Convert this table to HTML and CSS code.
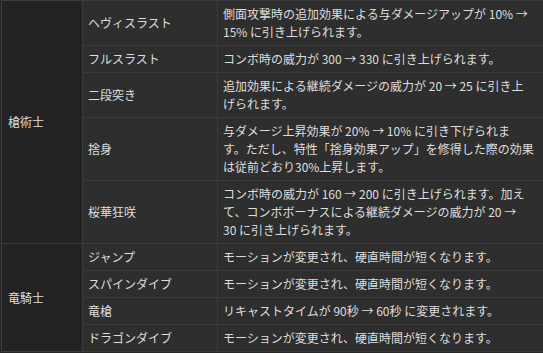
FILE: index.html
```html
<!DOCTYPE html>
<html lang="ja">
<head>
<meta charset="utf-8">
<link rel="stylesheet" href="styles.css">
</head>
<body>
<table class="changes">
  <colgroup>
    <col class="c-job">
    <col class="c-action">
    <col class="c-desc">
  </colgroup>
  <tbody>
    <tr>
      <th class="job" rowspan="5">槍術士</th>
      <td>ヘヴィスラスト</td>
      <td>側面攻撃時の追加効果による与ダメージアップが 10% →<br>15% に引き上げられます。</td>
    </tr>
    <tr>
      <td>フルスラスト</td>
      <td>コンボ時の威力が 300 → 330 に引き上げられます。</td>
    </tr>
    <tr>
      <td>二段突き</td>
      <td>追加効果による継続ダメージの威力が 20 → 25 に引き上<br>げられます。</td>
    </tr>
    <tr>
      <td>捨身</td>
      <td>与ダメージ上昇効果が 20% → 10% に引き下げられま<br>す。ただし、特性「捨身効果アップ」を修得した際の効果<br>は従前どおり30%上昇します。</td>
    </tr>
    <tr>
      <td>桜華狂咲</td>
      <td>コンボ時の威力が 160 → 200 に引き上げられます。加え<br>て、コンボボーナスによる継続ダメージの威力が 20 →<br>30 に引き上げられます。</td>
    </tr>
    <tr>
      <th class="job" rowspan="4">竜騎士</th>
      <td>ジャンプ</td>
      <td>モーションが変更され、硬直時間が短くなります。</td>
    </tr>
    <tr>
      <td>スパインダイブ</td>
      <td>モーションが変更され、硬直時間が短くなります。</td>
    </tr>
    <tr>
      <td>竜槍</td>
      <td>リキャストタイムが 90秒 → 60秒 に変更されます。</td>
    </tr>
    <tr>
      <td>ドラゴンダイブ</td>
      <td>モーションが変更され、硬直時間が短くなります。</td>
    </tr>
  </tbody>
</table>
</body>
</html>
```
FILE: styles.css
```css
html, body {
  margin: 0;
  padding: 0;
  background: #262626;
  overflow: hidden;
}
body {
  font-family: "Noto Sans CJK JP", "Noto Sans", sans-serif;
  font-size: 12px;
  line-height: 18px;
  color: #dedede;
}
.changes {
  border-collapse: collapse;
  table-layout: fixed;
  width: 548px;
  margin-left: 1px;
}
.c-job { width: 81px; }
.c-action { width: 135px; }
.c-desc { width: 332px; }
.changes th,
.changes td {
  border: 1px solid #3c3c3c;
  padding: 4px 4px 4px 5px;
  vertical-align: middle;
  text-align: left;
  background: #2e2e2e;
  font-weight: normal;
  white-space: nowrap;
}
.changes th.job {
  background: #222222;
  padding-left: 6px;
}
```
